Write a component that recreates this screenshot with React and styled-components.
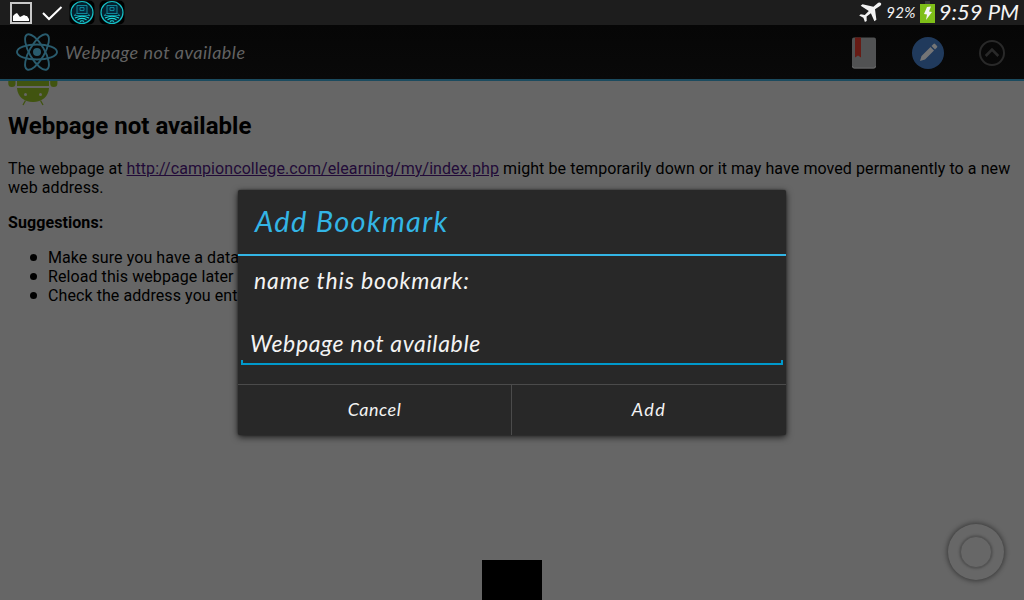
import React from "react";
import styled, { createGlobalStyle } from "styled-components";

const GlobalStyle = createGlobalStyle`
  * { box-sizing: border-box; }
  body { margin: 0; background: #666; }
  svg { display: block; flex: none; }
`;

const Screen = styled.div`
  position: relative;
  width: 1024px;
  height: 600px;
  overflow: hidden;
  display: flex;
  flex-direction: column;
  background: #666;
  font-family: Roboto, "Liberation Sans", sans-serif;
`;

const Script = styled.span`
  font-family: "Choco cooky", Lato, sans-serif;
  font-style: italic;
  font-weight: 400;
  font-size: ${(p) => p.$size}px;
  letter-spacing: ${(p) => p.$spacing || 0}px;
  line-height: ${(p) => p.$line || 1};
  white-space: nowrap;
  color: ${(p) => p.$color || "#f3f3f3"};
`;

const StatusBar = styled.header`
  display: flex;
  justify-content: space-between;
  height: 25px;
  flex: none;
  padding: 0 5px 0 9px;
  background: #1d1d1d;
`;

const StatusGroup = styled.div`
  display: flex;
  align-items: center;
  height: 25px;
  gap: ${(p) => p.$gap || 0}px;
`;

const AppBar = styled.nav`
  display: flex;
  align-items: center;
  height: 56px;
  flex: none;
  padding: 0 18px 0 15px;
  background: linear-gradient(#060606, #090909);
  border-bottom: 2px solid #1b4b5f;
`;

const BarTitle = styled.div`
  flex: 1;
  padding-left: 6px;
  line-height: 1;
`;

const Actions = styled.div`
  display: flex;
  align-items: center;
  gap: 35px;
  padding-top: 1px;
`;

const ActionPair = styled.div`
  display: flex;
  align-items: center;
  gap: 35px;
  margin-right: -2px;
`;

const Page = styled.main`
  padding: 0 8px;
  font-size: 16px;
  line-height: 19px;
  letter-spacing: 0.08px;
  color: #000;
`;

const Heading = styled.h1`
  margin: 6px 0 19px;
  font-size: 24px;
  line-height: 28px;
  font-weight: 700;
  letter-spacing: 0.02px;
`;

const Paragraph = styled.p`
  margin: 0 0 16px;
`;

const Link = styled.a`
  color: #220b38;
  text-decoration: underline;
`;

const List = styled.ul`
  margin: 0;
  padding-left: 22px;
  list-style: none;
`;

const Item = styled.li`
  display: flex;
  align-items: center;
  gap: 11px;

  &::before {
    content: "";
    width: 7px;
    height: 7px;
    border-radius: 50%;
    background: #000;
  }
`;

const Dialog = styled.section`
  position: absolute;
  left: 238px;
  top: 190px;
  width: 548px;
  height: 245px;
  display: flex;
  flex-direction: column;
  background: #282828;
  border-radius: 2px;
  box-shadow: 0 2px 7px rgba(0, 0, 0, 0.75), 0 0 2px rgba(0, 0, 0, 0.5);
`;

const DialogTitle = styled.div`
  display: flex;
  align-items: center;
  height: 66px;
  padding: 0 17px 4px;
  border-bottom: 2px solid #33b5e5;
`;

const DialogBody = styled.div`
  flex: 1;
  display: flex;
  flex-direction: column;
  padding: 8px 3px 0;
`;

const Label = styled.label`
  display: flex;
  align-items: center;
  height: 32px;
  padding-left: 13px;
`;

const Field = styled.div`
  display: flex;
  flex-direction: column;
  margin-top: 31px;
`;

const FieldValue = styled.div`
  display: flex;
  align-items: center;
  height: 33px;
  padding-left: 9px;
`;

const Underline = styled.div`
  height: 5px;
  border: 2px solid #0099cc;
  border-top: 0;
`;

const Buttons = styled.div`
  display: grid;
  grid-template-columns: 273px 275px;
  height: 51px;
  border-top: 1px solid #4b4b4b;
`;

const DialogButton = styled.button`
  display: flex;
  align-items: center;
  justify-content: center;
  padding: 0 0 2px;
  border: 0;
  background: transparent;
  & + & { border-left: 1px solid #4b4b4b; }
`;

const Notch = styled.div`
  position: absolute;
  left: 482px;
  top: 560px;
  width: 60px;
  height: 40px;
  background: #000;
`;

const FloatingRing = styled.div`
  position: absolute;
  left: 948px;
  top: 524px;
  width: 56px;
  height: 56px;
  display: grid;
  place-items: center;
  border-radius: 50%;
  background: #676767;
  box-shadow: 0 0 5px 1px rgba(0, 0, 0, 0.45);
`;

const RingCore = styled.div`
  width: 32px;
  height: 32px;
  border-radius: 50%;
  background: #676767;
  border: 1px solid #535353;
  box-shadow: 0 0 3px rgba(0, 0, 0, 0.4);
`;

const PictureIcon = () => (
  <svg width="24" height="25" viewBox="0 0 24 25">
    <rect x="2" y="3" width="20" height="20" fill="#1b1b1b" stroke="#c9c9c9" strokeWidth="2" />
    <path d="M4 21v-5l2-2 2-1 3 4 2-1 2-1 2 1 1 0 2 3v2z" fill="#fff" />
  </svg>
);

const CheckIcon = () => (
  <svg width="24" height="25" viewBox="0 0 24 25">
    <path d="M4 13l6 6L22.500 7" fill="none" stroke="#fff" strokeWidth="2" />
  </svg>
);

const LaptopIcon = () => (
  <svg width="26" height="25" viewBox="0 0 26 25">
    <rect x="0.500" y="0.500" width="25" height="24" rx="5" fill="#000" />
    <circle cx="13" cy="12.500" r="11" fill="#05202d" stroke="#16bfc6" strokeWidth="1.200" />
    <path d="M8 5.500h10v8H8z" fill="#032b3f" stroke="#0f8496" />
    <path d="M7.500 13.500L5 15.500h16l-2.500-2M11 7.500h4v3h-4z" fill="none" stroke="#0f8fa0" strokeWidth="0.900" />
    <path
      d="M6 18Q13 14.500 20 18M8.500 19.800Q13 17 17.500 19.800M11 21.500Q13 20 15 21.500"
      fill="none"
      stroke="#19d6d6"
      strokeWidth="1.100"
    />
  </svg>
);

const PlaneIcon = () => (
  <svg width="24" height="25" viewBox="0 0 24 25">
    <path
      d="M23 3.200c-1-1-2.700-.7-4 .5l-3.600 3L4.500 4.200 2.700 5.800l8.100 5.100-4 4.100-4-.8L1.200 15.500l4.200 2.200 1.500 4.200 1.800-1-.1-4.400 4.300-3.300 3.500 8.100 2-1.500-1.400-10.500 4.200-2.700c1.600-1 2.500-2.500 1.800-3.400z"
      fill="#f3f3f3"
    />
  </svg>
);

const BatteryIcon = () => (
  <svg width="15" height="25" viewBox="0 0 15 25">
    <rect x="5" y="1" width="5" height="3" fill="#3b3b3b" />
    <rect x="0" y="4" width="15" height="19" fill="#7fbf18" />
    <path d="M7 7l4-.5-2 5 3 .5-6 8 1-5.500-3-.5z" fill="#f5f5f5" />
  </svg>
);

const AtomIcon = () => (
  <svg width="44" height="44" viewBox="-22 -22 44 44">
    <g fill="none" stroke="#295b6d" strokeWidth="1.900">
      <ellipse rx="20" ry="7.500" />
      <ellipse rx="20" ry="7.500" transform="rotate(60)" />
      <ellipse rx="20" ry="7.500" transform="rotate(120)" />
    </g>
    <circle r="4" fill="#295b6d" />
  </svg>
);

const BookmarkIcon = () => (
  <svg width="24" height="32" viewBox="0 0 24 32">
    <rect y="0.500" width="24" height="31" rx="2" fill="#515253" />
    <path d="M0.500 29q0 2 2 2h19q2 0 2-2" fill="none" stroke="#69696a" strokeWidth="1" />
    <path d="M3 .5h6v20l-3-2-3 2z" fill="#661b15" />
  </svg>
);

const EditIcon = () => (
  <svg width="34" height="34" viewBox="0 0 34 34">
    <circle cx="17" cy="17" r="16" fill="#203a5c" />
    <path d="M9 25l1.500-5L19.500 11l3.500 3.500-9 9zM20.500 10l2-2q.8-.8 1.600 0l1.900 1.900q.8.8 0 1.600l-2 2z" fill="#747576" />
  </svg>
);

const UpIcon = () => (
  <svg width="28" height="28" viewBox="0 0 28 28">
    <circle cx="14" cy="14" r="12" fill="none" stroke="#292929" strokeWidth="2" />
    <path d="M7.700 17L14 10.700 20.300 17" fill="none" stroke="#292929" strokeWidth="2.600" />
  </svg>
);

const RobotIcon = () => (
  <svg width="50" height="25" viewBox="0 0 50 25">
    <g fill="#415410">
      <path d="M.3 0H7.500V2.500a3.600 3.600 0 0 1-7.200 0zM9 0H41V5H9zM42.200 0H49.400V2.500a3.600 3.600 0 0 1-7.200 0z" />
      <path d="M9 7H41C40.500 15.500 34 21 25 21S9.500 15.500 9 7z" />
    </g>
    <path d="M17.500 19.500L15 24M32.500 19.500L35 24" stroke="#415410" strokeWidth="1.300" />
    <circle cx="17.500" cy="13.500" r="1.500" fill="#666" />
    <circle cx="32.500" cy="13.500" r="1.500" fill="#666" />
  </svg>
);

export default function App() {
  return (
    <Screen>
      <GlobalStyle />
      <StatusBar>
        <StatusGroup $gap={6}>
          <PictureIcon />
          <CheckIcon />
          <StatusGroup $gap={4}>
            <LaptopIcon />
            <LaptopIcon />
          </StatusGroup>
        </StatusGroup>
        <StatusGroup $gap={4}>
          <PlaneIcon />
          <Script $size={15} $spacing={0.3}>92%</Script>
          <BatteryIcon />
          <Script $size={22} $line={1.1}>9:59 PM</Script>
        </StatusGroup>
      </StatusBar>
      <AppBar>
        <AtomIcon />
        <BarTitle>
          <Script $size={18} $spacing={0.5} $color="#626262">Webpage not available</Script>
        </BarTitle>
        <Actions>
          <ActionPair>
            <BookmarkIcon />
            <EditIcon />
          </ActionPair>
          <UpIcon />
        </Actions>
      </AppBar>
      <Page>
        <RobotIcon />
        <Heading>Webpage not available</Heading>
        <Paragraph>
          The webpage at <Link>http://campioncollege.com/elearning/my/index.php</Link> might be
          temporarily down or it may have moved permanently to a new web address.
        </Paragraph>
        <Paragraph>
          <b>Suggestions:</b>
        </Paragraph>
        <List>
          <Item>Make sure you have a data</Item>
          <Item>Reload this webpage later</Item>
          <Item>Check the address you ent</Item>
        </List>
      </Page>
      <Notch />
      <FloatingRing>
        <RingCore />
      </FloatingRing>
      <Dialog>
        <DialogTitle>
          <Script $size={29} $spacing={1.3} $color="#33b5e5">Add Bookmark</Script>
        </DialogTitle>
        <DialogBody>
          <Label>
            <Script $size={23} $spacing={0.85}>name this bookmark:</Script>
          </Label>
          <Field>
            <FieldValue>
              <Script $size={23} $spacing={0.65}>Webpage not available</Script>
            </FieldValue>
            <Underline />
          </Field>
        </DialogBody>
        <Buttons>
          <DialogButton>
            <Script $size={18} $spacing={0.5}>Cancel</Script>
          </DialogButton>
          <DialogButton>
            <Script $size={18} $spacing={1.5}>Add</Script>
          </DialogButton>
        </Buttons>
      </Dialog>
    </Screen>
  );
}
